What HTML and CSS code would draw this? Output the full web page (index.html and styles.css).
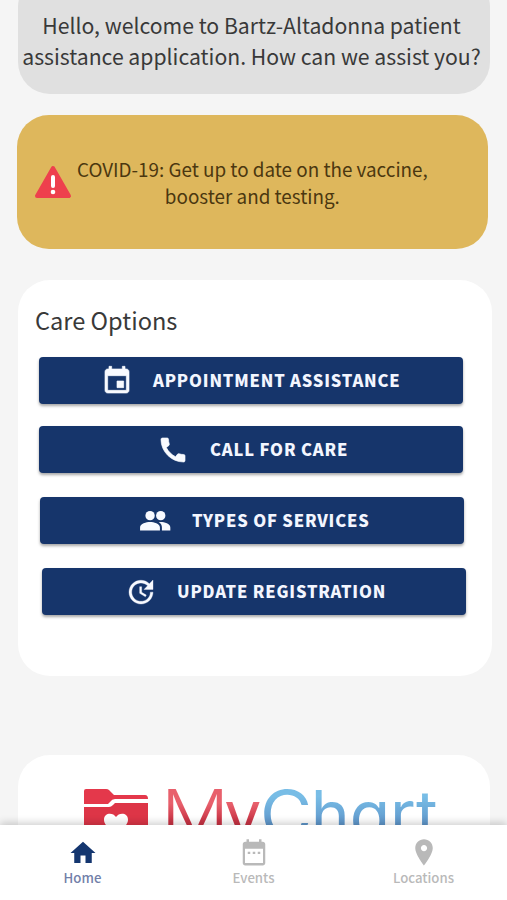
FILE: index.html
```html
<!DOCTYPE html>
<html lang="en">
<head>
    <meta charset="UTF-8">
    <meta name="viewport" content="width=device-width,initial-scale=1">
    <title>Bartz-Altadonna Patient Assistance</title>
    <link rel="stylesheet" href="styles.css">
</head>
<body>
<main>
    <!-- Greeting -->
    <section class="card greeting">
        <p>Hello, welcome to Bartz-Altadonna patient<br>assistance application. How can we assist you?</p>
    </section>

    <!-- Alert -->
    <section class="card alert">
        <svg class="alert-icon" width="38" height="34" viewBox="0 0 38 34" aria-hidden="true">
            <path d="M19 3 35 31H3Z" fill="#ee404d" stroke="#ee404d" stroke-width="4" stroke-linejoin="round"/>
            <path d="M19 12v9" stroke="#fff" stroke-width="4" stroke-linecap="round"/>
            <circle cx="19" cy="27" r="2.3" fill="#fff"/>
        </svg>
        <p>COVID-19: Get up to date on the vaccine,<br>booster and testing.</p>
    </section>

    <!-- Care options -->
    <section class="card care">
        <h2>Care Options</h2>
        <div class="options">
            <button class="option appointment">
                <svg viewBox="0 0 24 24" aria-hidden="true"><path d="M17 12h-5v5h5v-5zM16 1v2H8V1H6v2H5c-1.11 0-1.99.9-1.99 2L3 19c0 1.1.89 2 2 2h14c1.1 0 2-.9 2-2V5c0-1.1-.9-2-2-2h-1V1h-2zm3 18H5V8h14v11z"/></svg>
                <span>APPOINTMENT ASSISTANCE</span>
            </button>
            <button class="option call">
                <svg viewBox="0 0 24 24" aria-hidden="true"><path d="M20.01 15.38c-1.23 0-2.42-.2-3.53-.56-.35-.12-.74-.03-1.01.24l-1.57 1.97c-2.83-1.35-5.48-3.9-6.89-6.83l1.95-1.66c.27-.28.35-.67.24-1.02-.37-1.11-.56-2.3-.56-3.53 0-.54-.45-.99-.99-.99H4.19C3.65 3 3 3.24 3 3.99 3 13.28 10.73 21 20.01 21c.71 0 .99-.63.99-1.18v-3.45c0-.54-.45-.99-.99-.99z"/></svg>
                <span>CALL FOR CARE</span>
            </button>
            <button class="option services">
                <svg viewBox="0 0 24 24" aria-hidden="true"><circle cx="8.300" cy="8" r="3.500"/><circle cx="16.300" cy="8" r="3.500"/><path d="M8.300 12.800C5.500 12.800.8 14.100.8 16.800v2.400h14.900V16.800c0-2.700-4.600-4-7.400-4zM16.300 12.800l-1.500.1C16.600 13.900 17.200 15.200 17.200 16.800v2.400H23.500V16.800c0-2.700-4.500-4-7.200-4z"/></svg>
                <span>TYPES OF SERVICES</span>
            </button>
            <button class="option update">
                <svg viewBox="0 0 24 24" aria-hidden="true"><path d="M21 10.120h-6.780l2.740-2.820c-2.730-2.700-7.150-2.800-9.880-.1-2.730 2.710-2.730 7.080 0 9.790s7.150 2.710 9.880 0C18.320 15.650 19 14.080 19 12.100h2c0 1.980-.88 4.550-2.640 6.290-3.510 3.480-9.210 3.480-12.720 0-3.500-3.470-3.530-9.110-.02-12.580s9.140-3.470 12.650 0L21 3v7.120zM12.500 8v4.250l3.500 2.080-.72 1.210L11 13V8h1.500z"/></svg>
                <span>UPDATE REGISTRATION</span>
            </button>
        </div>
    </section>

    <!-- MyChart -->
    <section class="card mychart">
        <svg width="66" height="56" viewBox="0 0 66 56" aria-hidden="true">
            <path d="M3 0H23q2 0 3 1l5 5H62q3 0 3 4H32q-3 0-5 3l-2 2H1V2q0-2 2-2Z" fill="#e4384b"/>
            <path d="M1 18H26q2 0 4-2l2-2H65V54H1Z" fill="#dd3547"/>
            <path d="M33 46C24 38 21 35 21 30.500c0-7 9-7.500 12-2.500 3-5 12-4.500 12 2.500C45 35 42 38 33 46Z" fill="#fff"/>
        </svg>
        <div class="wordmark"><span class="my cap-m">M</span><span class="my">y</span><span class="chart cap-c">C</span><span class="chart">hart</span></div>
    </section>
</main>

<nav>
    <a class="tab active">
        <svg viewBox="0 0 24 24" aria-hidden="true"><path d="M10 20v-6h4v6h5v-8h3L12 3 2 12h3v8z"/></svg>
        <span>Home</span>
    </a>
    <a class="tab">
        <svg viewBox="0 0 24 24" aria-hidden="true"><path d="M19 3h-1V1h-2v2H8V1H6v2H5c-1.110 0-2 .9-2 2v15c0 1.100.89 2 2 2h14c1.100 0 2-.9 2-2V5c0-1.100-.9-2-2-2zm.2 17H4.800V8.500h14.400V20zM7 11h2v1.800H7zM11 11h2v1.800h-2zM15 11h2v1.800h-2z"/></svg>
        <span>Events</span>
    </a>
    <a class="tab">
        <svg viewBox="0 0 24 24" aria-hidden="true"><path d="M12 1C8.130 1 5 4.130 5 8c0 5.250 7 14 7 14s7-8.750 7-14c0-3.870-3.130-7-7-7zm0 9.500c-1.380 0-2.500-1.120-2.500-2.500s1.120-2.500 2.500-2.500 2.500 1.120 2.500 2.500-1.120 2.500-2.500 2.500z"/></svg>
        <span>Locations</span>
    </a>
</nav>
</body>
</html>
```
FILE: styles.css
```css
:root{
    --c-bg:#f5f5f5;
    --c-navy:#16356b;
    --c-text:#393939;
    --c-muted:#b9b9b9;
    --radius:32px;
}
*{box-sizing:border-box;padding:0;margin:0}
body{
    height:900px;display:flex;flex-direction:column;overflow:hidden;
    background:var(--c-bg);color:var(--c-text);
    font-family:"Noto Sans CJK SC","Noto Sans",sans-serif;
}
main{flex:1;min-height:0;overflow:hidden;display:flex;flex-direction:column}
.card{flex:none;border-radius:var(--radius);white-space:nowrap}

.greeting{
    height:119px;margin:-25px 17px 0 18px;padding:35px 5px 0 0;
    background:#e0e0e0;
    font-size:21.200px;line-height:30.500px;text-align:center;
}
.alert{
    height:134px;margin:21px 19px 0 17px;padding-left:17px;
    display:flex;align-items:center;gap:5px;
    background:#deb75c;color:#4b3710;
    font-size:18.850px;line-height:27px;text-align:center;
}

.care{height:396px;margin:31px 15px 0 18px;padding:23px 0 0 17px;background:#fff}
.care h2{font-size:23.600px;line-height:34px;font-weight:400}
.options{display:flex;flex-direction:column;gap:23px;padding:20px 0 0 4px}
.option{
    width:424px;height:47px;display:flex;align-items:center;
    border:0;border-radius:4px;background:var(--c-navy);color:#f3f6ff;
    font:900 16.500px/47px "Noto Sans CJK SC","Noto Sans",sans-serif;letter-spacing:.82px;
    box-shadow:0 2px 3px rgba(0,0,0,.35);
}
.option svg{width:32px;height:32px;fill:#f8faff;stroke:#f8faff;stroke-width:.5}
.option.services svg{stroke:none}
.option.update svg{stroke-width:.25}
.appointment{padding-left:62px;gap:20px}
.call{padding-left:118px;gap:21px;margin-top:-1px}
.services{padding-left:99px;gap:21px;margin:1px 0 0 1px}
.update{padding-left:83px;gap:20px;margin:1px 0 0 3px}

.mychart{
    height:130px;margin:79px 17px 0 18px;padding:34px 0 0 65px;
    display:flex;align-items:flex-start;gap:12px;background:#fff;
}
.wordmark{
    display:flex;margin-top:-10px;
    font:400 66px/70px Inter,sans-serif;font-feature-settings:"cv11";letter-spacing:-1px;
}
.wordmark span{
    -webkit-background-clip:text;background-clip:text;color:transparent;
    transform-origin:left;
}
.wordmark .my{background-image:linear-gradient(#e8606c 35%,#c93445 60%)}
.wordmark .chart{background-image:linear-gradient(#78bde6 25%,#5587c0 80%)}
.wordmark .cap-m{transform:scaleX(1.13);font-weight:300;font-size:67px;margin-right:4px}
.wordmark .cap-c{transform:scaleX(1.08);margin-right:3px}
.cap-c + .chart{letter-spacing:0}

nav{
    position:relative;flex:none;height:75px;padding-top:12px;
    display:flex;background:#fff;
    box-shadow:0 -2px 8px rgba(0,0,0,.2);
}
.tab{
    display:flex;flex-direction:column;align-items:center;width:169px;
    color:var(--c-muted);font-size:13.200px;font-weight:500;line-height:20px;
}
.tab:first-child{padding-right:4px}
.tab:last-child{padding-left:2px}
.tab svg{width:30px;height:30px;fill:currentColor;margin-top:1px}
.active{color:#7280a9}
.active svg{fill:#14366f}
```
